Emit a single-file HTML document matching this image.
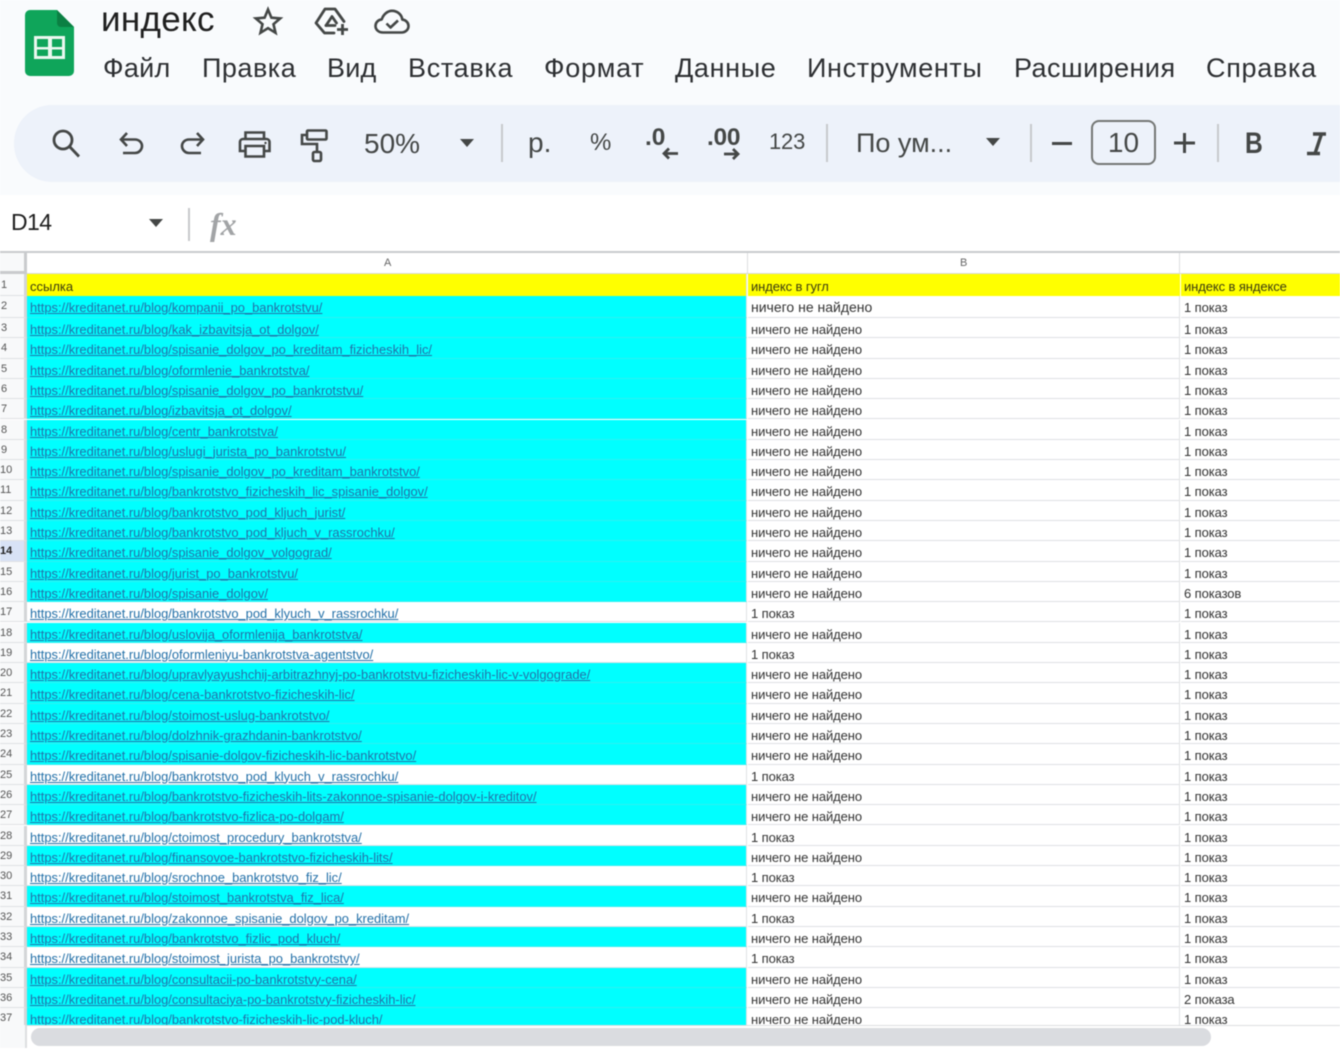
<!DOCTYPE html>
<html lang="ru"><head><meta charset="utf-8"><title>индекс</title>
<style>
html,body{margin:0;padding:0;width:1340px;height:1050px;overflow:hidden;background:#fff}
body{font-family:"Liberation Sans",Arial,sans-serif;position:relative}
#wrap{position:absolute;left:0;top:0;width:1340px;height:1050px;overflow:hidden;filter:blur(.4px);background:#fff}
.t{position:absolute;white-space:nowrap;color:#3c4043}
#top{position:absolute;left:0;top:0;width:1340px;height:250px;background:#f9fbfd}
#tb{position:absolute;left:14px;top:105px;width:1400px;height:77px;border-radius:38px;background:#edf2fa}
.sep{position:absolute;width:2px;top:124px;height:38px;background:#c7c9cc}
.m{font-size:27px;top:52px;line-height:32px;color:#2d2f32;letter-spacing:.65px}
.ar{position:absolute;width:0;height:0;border-left:7.5px solid transparent;border-right:7.5px solid transparent;border-top:8px solid #444746}
svg{position:absolute;overflow:visible}
#grid{position:absolute;left:0;top:251px;width:1340px;height:774px;overflow:hidden;background:#fff;border-top:2px solid #c9cbcd;box-sizing:border-box}
.r{position:absolute;left:0;width:1340px;height:20.3px;font-size:13px;color:#333}
.r>div{position:absolute;top:0;bottom:0;box-sizing:border-box;border-bottom:1px solid #dfe1e3;white-space:nowrap;line-height:23px}
.n{left:0;width:27px;font-size:11px;color:#555;background:#f8f9fa;border-right:3px solid #d3d5d7;line-height:20px!important;padding-right:16px;text-align:center}
.a{left:27px;width:720px;padding-left:3px;border-right:1px solid #e0e2e4;overflow:hidden}
.a a{color:#2370a8;text-decoration:underline;font-size:12.9px}
.r>.cy{background:#0ff;border-bottom-color:#2ff0f2}
.b{left:748px;width:432px;padding-left:3px;border-right:1px solid #e0e2e4;letter-spacing:-.1px}
.c{left:1181px;width:159px;padding-left:3px;letter-spacing:-.1px}
.y>div{background:#ff0;color:#3a3a10;border-bottom:0;line-height:25px!important}
.y>.n{background:#f8f9fa;color:#555;line-height:22px!important}
.p>div{line-height:24px}
.p>.n{line-height:20px!important}
</style></head><body><div id="wrap">
<div id="top"></div>

<svg style="left:25px;top:10px" width="49" height="66" viewBox="0 0 49 66">
<path d="M5 0H32L49 17V61a5 5 0 0 1-5 5H5a5 5 0 0 1-5-5V5a5 5 0 0 1 5-5z" fill="#0fa55a"/>
<path d="M32 0L49 17H36a4 4 0 0 1-4-4z" fill="#0b8043"/>
<path d="M9 26H40V49H9z M12 29V37H23V29z M27 29V37H37V29z M12 39.500V46H23V39.500z M27 39.500V46H37V39.500z" fill="#eaf7ef" fill-rule="evenodd"/>
</svg>

<div class="t" style="left:101px;top:0;font-size:35px;line-height:40px;color:#1f1f1f;letter-spacing:.3px">индекс</div>

<svg style="left:253px;top:6px" width="30" height="30" viewBox="0 0 30 30" fill="none" stroke="#444746" stroke-width="2.6" stroke-linejoin="miter">
<path d="M15 3.500l3.400 8.200 8.800.7-6.700 5.800 2 8.600L15 22.200l-7.500 4.600 2-8.600-6.700-5.800 8.800-.7z"/></svg>

<svg style="left:314px;top:6px" width="35" height="30" viewBox="0 0 35 30" fill="none" stroke="#444746" stroke-width="2.8" stroke-linejoin="round" stroke-linecap="round">
<path d="M20 27H10.500L2 17 11 3h10l9 12.500"/><path d="M12 19.500L18 10.500l4.500 6.500"/><path d="M12 19.500H21"/><path d="M28.500 18v11M23 23.500h11" stroke-linecap="butt"/></svg>

<svg style="left:374px;top:9px" width="36" height="26" viewBox="0 0 36 26" fill="none" stroke="#444746" stroke-width="2.6" stroke-linejoin="round" stroke-linecap="round">
<path d="M9 23.500C4.500 23.500 1.500 20.500 1.500 17c0-3.500 2.700-6.300 6.200-6.600C9.300 5.500 13.500 1.800 18 1.800c5.500 0 9.800 4 10.300 8.800 3.500.4 6.200 3 6.200 6.400 0 3.600-3 6.500-7 6.500z"/><path d="M12.500 14.500l4 4 7.500-7" stroke-linecap="butt"/></svg>

<div class="t m" style="left:103px;letter-spacing:.3px">Файл</div>
<div class="t m" style="left:202px;letter-spacing:.5px">Правка</div>
<div class="t m" style="left:327px;letter-spacing:.2px">Вид</div>
<div class="t m" style="left:408px;letter-spacing:.7px">Вставка</div>
<div class="t m" style="left:544px;letter-spacing:.75px">Формат</div>
<div class="t m" style="left:675px">Данные</div>
<div class="t m" style="left:807px;letter-spacing:.65px">Инструменты</div>
<div class="t m" style="left:1014px;letter-spacing:.45px">Расширения</div>
<div class="t m" style="left:1206px;letter-spacing:.7px">Справка</div>

<div id="tb"></div>

<svg style="left:50px;top:128px" width="32" height="32" viewBox="0 0 32 32" fill="none" stroke="#444746" stroke-width="2.800">
<circle cx="13" cy="12" r="9"/><path d="M19.500 18.500L29 28.500"/></svg>

<svg style="left:118px;top:130px" width="28" height="30" viewBox="0 0 28 30" fill="none" stroke="#444746" stroke-width="2.600">
<path d="M9 3L3 9.500l6 6.500"/><path d="M3 9.500H17c4 0 7 3 7 6.500s-3 7-7 7H5"/></svg>

<svg style="left:178px;top:130px" width="28" height="30" viewBox="0 0 28 30" fill="none" stroke="#444746" stroke-width="2.600">
<path d="M19 3l6 6.500-6 6.500"/><path d="M25 9.500H11c-4 0-7 3-7 6.500s3 7 7 7h12"/></svg>

<svg style="left:238px;top:130px" width="34" height="28" viewBox="0 0 34 28" fill="none" stroke="#444746" stroke-width="2.600">
<path d="M7.500 9V2.500h18.500V9"/><path d="M7 21H2V12a3 3 0 0 1 3-3h23.500a3 3 0 0 1 3 3v9h-5"/><path d="M7.500 16h18.500v10.500H7.500z"/><circle cx="27.500" cy="13" r="1.200" fill="#444746" stroke="none"/></svg>

<svg style="left:300px;top:128px" width="30" height="36" viewBox="0 0 30 36" fill="none" stroke="#444746" stroke-width="2.600">
<rect x="7" y="2.500" width="19.500" height="9" rx="1"/><path d="M7 7H2v9h15v8"/><rect x="13" y="24" width="8" height="9" rx="1.500"/></svg>

<div class="t" style="left:364px;top:127px;font-size:28px;line-height:34px;color:#444746">50%</div>
<div class="ar" style="left:460px;top:139px"></div>
<div class="sep" style="left:501px"></div>
<div class="t" style="left:528px;top:126px;font-size:28px;line-height:34px;color:#444746">р.</div>
<div class="t" style="left:590px;top:127px;font-size:24px;line-height:32px;color:#444746">%</div>

<div class="t" style="left:645px;top:123px;font-size:24.500px;line-height:30px;font-weight:bold;color:#444746">.0</div>
<svg style="left:662px;top:147px" width="17" height="13" viewBox="0 0 17 13" fill="none" stroke="#444746" stroke-width="2.800"><path d="M16 6.500H2M7 1.500L2 6.500 7 11.500"/></svg>
<div class="t" style="left:707px;top:123px;font-size:24.500px;line-height:30px;font-weight:bold;color:#444746;letter-spacing:-.3px">.00</div>
<svg style="left:723px;top:148px" width="17" height="13" viewBox="0 0 17 13" fill="none" stroke="#444746" stroke-width="2.800"><path d="M1 6H15M10 1L15 6 10 11"/></svg>

<div class="t" style="left:769px;top:127px;font-size:22px;line-height:30px;color:#444746;letter-spacing:-.2px">123</div>
<div class="sep" style="left:826px"></div>
<div class="t" style="left:856px;top:126px;font-size:27px;line-height:34px;color:#444746">По ум...</div>
<div class="ar" style="left:986px;top:138px"></div>
<div class="sep" style="left:1030px"></div>
<div style="position:absolute;left:1052px;top:142px;width:20px;height:3px;background:#444746"></div>
<div style="position:absolute;left:1091px;top:120px;width:65px;height:45px;box-sizing:border-box;border:2px solid #747775;border-radius:8px"></div>
<div class="t" style="left:1091px;width:65px;text-align:center;top:126px;font-size:28px;line-height:34px;color:#444746">10</div>
<svg style="left:1174px;top:132px" width="21" height="22" viewBox="0 0 21 22" fill="none" stroke="#444746" stroke-width="3"><path d="M0 11H21M10.500 1V21"/></svg>
<div class="sep" style="left:1217px"></div>
<div class="t" style="left:1245px;top:128px;font-size:30px;line-height:32px;font-weight:bold;color:#444746;transform:scaleX(.82);transform-origin:left center">B</div>
<svg style="left:1304px;top:131px" width="24" height="26" viewBox="0 0 24 26" fill="none" stroke="#444746" stroke-width="3.400"><path d="M9 3H22M3 22.500H16M17.500 3L11 22.500"/></svg>

<div style="position:absolute;left:0;top:195px;width:1340px;height:56px;background:#fff"></div>
<div class="t" style="left:11px;top:207px;font-size:23px;line-height:30px;color:#1f1f1f;letter-spacing:-.6px">D14</div>
<div class="ar" style="left:149px;top:219px"></div>
<div style="position:absolute;left:188px;top:208px;width:2px;height:33px;background:#c7c9cc"></div>
<div class="t" style="left:210px;top:207px;font-family:'Liberation Serif',serif;font-style:italic;font-weight:bold;font-size:32px;line-height:34px;color:#a2a4a6">fx</div>

<div id="grid">
<div style="position:absolute;left:0;top:0;width:27px;height:21px;background:#f8f9fa;border-right:3px solid #c9cbcd;border-bottom:3px solid #c9cbcd;box-sizing:border-box"></div>
<div style="position:absolute;left:747px;top:0;width:1px;height:21px;background:#dcdee0"></div>
<div style="position:absolute;left:1179px;top:0;width:1px;height:21px;background:#dcdee0"></div>
<div style="position:absolute;left:27px;top:20px;width:1313px;height:1px;background:#d8dadc"></div>
<div class="t" style="left:384px;top:3px;font-size:11px;line-height:14px;color:#666">A</div>
<div class="t" style="left:960px;top:3px;font-size:11px;line-height:14px;color:#666">B</div>

<div class="r y" style="top:21px;height:22px"><div class="n" style="border-bottom:1px solid #dfe1e3">1</div><div class="a">ссылка</div><div class="b" style="border-right:0">индекс в гугл</div><div class="c">индекс в яндексе</div></div>
<div class="r p" style="top:43px;height:22px"><div class="n">2</div><div class="a cy"><a>https://kreditanet.ru/blog/kompanii_po_bankrotstvu/</a></div><div class="b" style="font-size:14px;letter-spacing:0;line-height:22px">ничего не найдено</div><div class="c">1 показ</div></div>
<div class="r" style="top:65px"><div class="n">3</div><div class="a cy"><a>https://kreditanet.ru/blog/kak_izbavitsja_ot_dolgov/</a></div><div class="b">ничего не найдено</div><div class="c">1 показ</div></div>
<div class="r" style="top:85.3px"><div class="n">4</div><div class="a cy"><a>https://kreditanet.ru/blog/spisanie_dolgov_po_kreditam_fizicheskih_lic/</a></div><div class="b">ничего не найдено</div><div class="c">1 показ</div></div>
<div class="r" style="top:105.6px"><div class="n">5</div><div class="a cy"><a>https://kreditanet.ru/blog/oformlenie_bankrotstva/</a></div><div class="b">ничего не найдено</div><div class="c">1 показ</div></div>
<div class="r" style="top:125.9px"><div class="n">6</div><div class="a cy"><a>https://kreditanet.ru/blog/spisanie_dolgov_po_bankrotstvu/</a></div><div class="b">ничего не найдено</div><div class="c">1 показ</div></div>
<div class="r" style="top:146.2px"><div class="n">7</div><div class="a cy"><a>https://kreditanet.ru/blog/izbavitsja_ot_dolgov/</a></div><div class="b">ничего не найдено</div><div class="c">1 показ</div></div>
<div class="r" style="top:166.5px"><div class="n">8</div><div class="a cy"><a>https://kreditanet.ru/blog/centr_bankrotstva/</a></div><div class="b">ничего не найдено</div><div class="c">1 показ</div></div>
<div class="r" style="top:186.8px"><div class="n">9</div><div class="a cy"><a>https://kreditanet.ru/blog/uslugi_jurista_po_bankrotstvu/</a></div><div class="b">ничего не найдено</div><div class="c">1 показ</div></div>
<div class="r" style="top:207.1px"><div class="n">10</div><div class="a cy"><a>https://kreditanet.ru/blog/spisanie_dolgov_po_kreditam_bankrotstvo/</a></div><div class="b">ничего не найдено</div><div class="c">1 показ</div></div>
<div class="r" style="top:227.4px"><div class="n">11</div><div class="a cy"><a>https://kreditanet.ru/blog/bankrotstvo_fizicheskih_lic_spisanie_dolgov/</a></div><div class="b">ничего не найдено</div><div class="c">1 показ</div></div>
<div class="r" style="top:247.7px"><div class="n">12</div><div class="a cy"><a>https://kreditanet.ru/blog/bankrotstvo_pod_kljuch_jurist/</a></div><div class="b">ничего не найдено</div><div class="c">1 показ</div></div>
<div class="r" style="top:268px"><div class="n">13</div><div class="a cy"><a>https://kreditanet.ru/blog/bankrotstvo_pod_kljuch_v_rassrochku/</a></div><div class="b">ничего не найдено</div><div class="c">1 показ</div></div>
<div class="r" style="top:288.3px"><div class="n" style="background:#d8e2f6;font-weight:bold;color:#222">14</div><div class="a cy"><a>https://kreditanet.ru/blog/spisanie_dolgov_volgograd/</a></div><div class="b">ничего не найдено</div><div class="c">1 показ</div></div>
<div class="r" style="top:308.6px"><div class="n">15</div><div class="a cy"><a>https://kreditanet.ru/blog/jurist_po_bankrotstvu/</a></div><div class="b">ничего не найдено</div><div class="c">1 показ</div></div>
<div class="r" style="top:328.9px"><div class="n">16</div><div class="a cy"><a>https://kreditanet.ru/blog/spisanie_dolgov/</a></div><div class="b">ничего не найдено</div><div class="c">6 показов</div></div>
<div class="r" style="top:349.2px"><div class="n">17</div><div class="a"><a>https://kreditanet.ru/blog/bankrotstvo_pod_klyuch_v_rassrochku/</a></div><div class="b">1 показ</div><div class="c">1 показ</div></div>
<div class="r" style="top:369.5px"><div class="n">18</div><div class="a cy"><a>https://kreditanet.ru/blog/uslovija_oformlenija_bankrotstva/</a></div><div class="b">ничего не найдено</div><div class="c">1 показ</div></div>
<div class="r" style="top:389.8px"><div class="n">19</div><div class="a"><a>https://kreditanet.ru/blog/oformleniyu-bankrotstva-agentstvo/</a></div><div class="b">1 показ</div><div class="c">1 показ</div></div>
<div class="r" style="top:410.1px"><div class="n">20</div><div class="a cy"><a>https://kreditanet.ru/blog/upravlyayushchij-arbitrazhnyj-po-bankrotstvu-fizicheskih-lic-v-volgograde/</a></div><div class="b">ничего не найдено</div><div class="c">1 показ</div></div>
<div class="r" style="top:430.4px"><div class="n">21</div><div class="a cy"><a>https://kreditanet.ru/blog/cena-bankrotstvo-fizicheskih-lic/</a></div><div class="b">ничего не найдено</div><div class="c">1 показ</div></div>
<div class="r" style="top:450.7px"><div class="n">22</div><div class="a cy"><a>https://kreditanet.ru/blog/stoimost-uslug-bankrotstvo/</a></div><div class="b">ничего не найдено</div><div class="c">1 показ</div></div>
<div class="r" style="top:471px"><div class="n">23</div><div class="a cy"><a>https://kreditanet.ru/blog/dolzhnik-grazhdanin-bankrotstvo/</a></div><div class="b">ничего не найдено</div><div class="c">1 показ</div></div>
<div class="r" style="top:491.3px"><div class="n">24</div><div class="a cy"><a>https://kreditanet.ru/blog/spisanie-dolgov-fizicheskih-lic-bankrotstvo/</a></div><div class="b">ничего не найдено</div><div class="c">1 показ</div></div>
<div class="r" style="top:511.6px"><div class="n">25</div><div class="a"><a>https://kreditanet.ru/blog/bankrotstvo_pod_klyuch_v_rassrochku/</a></div><div class="b">1 показ</div><div class="c">1 показ</div></div>
<div class="r" style="top:531.9px"><div class="n">26</div><div class="a cy"><a>https://kreditanet.ru/blog/bankrotstvo-fizicheskih-lits-zakonnoe-spisanie-dolgov-i-kreditov/</a></div><div class="b">ничего не найдено</div><div class="c">1 показ</div></div>
<div class="r" style="top:552.2px"><div class="n">27</div><div class="a cy"><a>https://kreditanet.ru/blog/bankrotstvo-fizlica-po-dolgam/</a></div><div class="b">ничего не найдено</div><div class="c">1 показ</div></div>
<div class="r" style="top:572.5px"><div class="n">28</div><div class="a"><a>https://kreditanet.ru/blog/ctoimost_procedury_bankrotstva/</a></div><div class="b">1 показ</div><div class="c">1 показ</div></div>
<div class="r" style="top:592.8px"><div class="n">29</div><div class="a cy"><a>https://kreditanet.ru/blog/finansovoe-bankrotstvo-fizicheskih-lits/</a></div><div class="b">ничего не найдено</div><div class="c">1 показ</div></div>
<div class="r" style="top:613.1px"><div class="n">30</div><div class="a"><a>https://kreditanet.ru/blog/srochnoe_bankrotstvo_fiz_lic/</a></div><div class="b">1 показ</div><div class="c">1 показ</div></div>
<div class="r" style="top:633.4px"><div class="n">31</div><div class="a cy"><a>https://kreditanet.ru/blog/stoimost_bankrotstva_fiz_lica/</a></div><div class="b">ничего не найдено</div><div class="c">1 показ</div></div>
<div class="r" style="top:653.7px"><div class="n">32</div><div class="a"><a>https://kreditanet.ru/blog/zakonnoe_spisanie_dolgov_po_kreditam/</a></div><div class="b">1 показ</div><div class="c">1 показ</div></div>
<div class="r" style="top:674px"><div class="n">33</div><div class="a cy"><a>https://kreditanet.ru/blog/bankrotstvo_fizlic_pod_kluch/</a></div><div class="b">ничего не найдено</div><div class="c">1 показ</div></div>
<div class="r" style="top:694.3px"><div class="n">34</div><div class="a"><a>https://kreditanet.ru/blog/stoimost_jurista_po_bankrotstvy/</a></div><div class="b">1 показ</div><div class="c">1 показ</div></div>
<div class="r" style="top:714.6px"><div class="n">35</div><div class="a cy"><a>https://kreditanet.ru/blog/consultacii-po-bankrotstvy-cena/</a></div><div class="b">ничего не найдено</div><div class="c">1 показ</div></div>
<div class="r" style="top:734.9px"><div class="n">36</div><div class="a cy"><a>https://kreditanet.ru/blog/consultaciya-po-bankrotstvy-fizicheskih-lic/</a></div><div class="b">ничего не найдено</div><div class="c">2 показа</div></div>
<div class="r" style="top:755.2px"><div class="n">37</div><div class="a cy"><a>https://kreditanet.ru/blog/bankrotstvo-fizicheskih-lic-pod-kluch/</a></div><div class="b">ничего не найдено</div><div class="c">1 показ</div></div>
</div>

<div style="position:absolute;left:0;top:1025px;width:1340px;height:1px;background:#dcdee0"></div>
<div style="position:absolute;left:0;top:1025px;width:27px;height:23px;background:#f8f9fa;border-right:2px solid #dcdee0;box-sizing:border-box"></div>
<div style="position:absolute;left:31px;top:1028px;width:1180px;height:18px;border-radius:9px;background:#dadce0"></div>
</div></body></html>
